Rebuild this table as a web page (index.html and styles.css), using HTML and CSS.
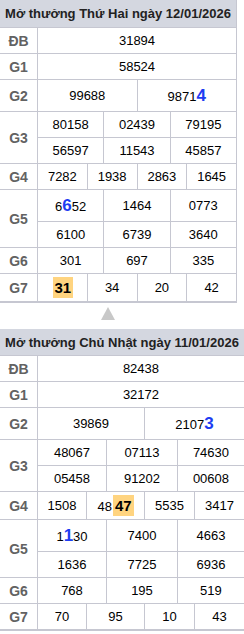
FILE: index.html
```html
<!DOCTYPE html>
<html lang="vi">
<head>
<meta charset="utf-8">
<title>Kết quả</title>
<link rel="stylesheet" href="styles.css">
</head>
<body>
<div class="kq kq-1">
  <div class="hd">Mở thưởng Thứ Hai ngày 12/01/2026</div>
  <div class="lab">ĐB</div><div class="c s12">31894</div>
  <div class="lab">G1</div><div class="c s12">58524</div>
  <div class="lab">G2</div><div class="c s6">99688</div><div class="c s6"><span>9871<b class="bl">4</b></span></div>
  <div class="lab r2">G3</div><div class="c s4">80158</div><div class="c s4">02439</div><div class="c s4">79195</div>
  <div class="c s4">56597</div><div class="c s4">11543</div><div class="c s4">45857</div>
  <div class="lab">G4</div><div class="c s3">7282</div><div class="c s3">1938</div><div class="c s3">2863</div><div class="c s3">1645</div>
  <div class="lab r2">G5</div><div class="c s4"><span>6<b class="bl">6</b>52</span></div><div class="c s4">1464</div><div class="c s4">0773</div>
  <div class="c s4">6100</div><div class="c s4">6739</div><div class="c s4">3640</div>
  <div class="lab">G6</div><div class="c s4">301</div><div class="c s4">697</div><div class="c s4">335</div>
  <div class="lab last">G7</div><div class="c s3 last"><b class="hl">31</b></div><div class="c s3 last">34</div><div class="c s3 last">20</div><div class="c s3 last">42</div>
</div>
<div class="arrow-row"><div class="arrow"></div></div>
<div class="kq kq-2">
  <div class="hd">Mở thưởng Chủ Nhật ngày 11/01/2026</div>
  <div class="lab">ĐB</div><div class="c s12">82438</div>
  <div class="lab">G1</div><div class="c s12">32172</div>
  <div class="lab">G2</div><div class="c s6">39869</div><div class="c s6"><span>2107<b class="bl">3</b></span></div>
  <div class="lab r2">G3</div><div class="c s4">48067</div><div class="c s4">07113</div><div class="c s4">74630</div>
  <div class="c s4">05458</div><div class="c s4">91202</div><div class="c s4">00608</div>
  <div class="lab">G4</div><div class="c s3">1508</div><div class="c s3"><span>48<b class="hl">47</b></span></div><div class="c s3">5535</div><div class="c s3">3417</div>
  <div class="lab r2">G5</div><div class="c s4"><span>1<b class="bl">1</b>30</span></div><div class="c s4">7400</div><div class="c s4">4663</div>
  <div class="c s4">1636</div><div class="c s4">7725</div><div class="c s4">6936</div>
  <div class="lab">G6</div><div class="c s4">768</div><div class="c s4">195</div><div class="c s4">519</div>
  <div class="lab last">G7</div><div class="c s3 last">70</div><div class="c s3 last">95</div><div class="c s3 last">10</div><div class="c s3 last">43</div>
</div>
</body>
</html>
```
FILE: styles.css
```css
html, body {
  margin: 0;
  padding: 0;
  background: #fff;
  overflow: hidden;
}
body {
  font-family: "Liberation Sans", Arial, sans-serif;
  font-size: 13px;
  color: #000;
}
.kq {
  display: grid;
}
.kq-1 {
  width: 237px;
  grid-template-columns: 38px repeat(12, 1fr);
  grid-template-rows: 28px 26px 26px 32px 26px 26px 26px 32px 26px 26px 29px;
}
.kq-2 {
  width: 245px;
  grid-template-columns: 38px 16.33px 16.33px 16.34px 20px 19px 19px 16.5px 16.5px 17px 16.67px 16.67px 16.66px;
  grid-template-rows: 27px 26px 26px 32px 26px 26px 28px 32px 26px 26px 27px;
}
.hd, .lab, .c {
  display: flex;
  align-items: center;
  justify-content: center;
  box-sizing: border-box;
  border-right: 1px solid #c6c7d1;
  border-bottom: 1px solid #c6c7d1;
  white-space: nowrap;
}
.hd {
  grid-column: 1 / -1;
  background: #d4d7e0;
  color: #222;
  font-weight: bold;
  font-size: 13px;
}
.lab {
  grid-column: 1;
  font-size: 14px;
  font-weight: bold;
  color: #626262;
}
.r2 { grid-row: span 2; }
.s12 { grid-column: span 12; }
.s6 { grid-column: span 6; }
.s4 { grid-column: span 4; }
.s3 { grid-column: span 3; }
.last { border-bottom-width: 2px; }
.bl {
  color: #1d3cf2;
  font-weight: bold;
  font-size: 17px;
}
.hl {
  display: inline-block;
  background: #ffd480;
  font-weight: bold;
  font-size: 15px;
  line-height: 21px;
  padding: 0 2px;
  margin-left: 1px;
}
.arrow-row {
  height: 26px;
  box-sizing: border-box;
  padding: 4px 0 0 101px;
}
.arrow {
  width: 0;
  height: 0;
  border-left: 7.5px solid transparent;
  border-right: 7.5px solid transparent;
  border-bottom: 13px solid #c8c8c8;
}
```
